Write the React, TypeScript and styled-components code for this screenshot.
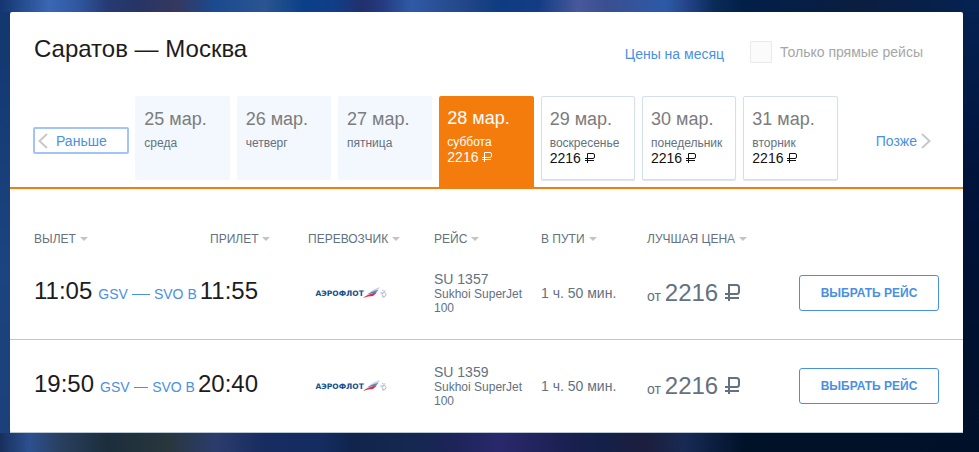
import React from "react";
import styled, { createGlobalStyle, css } from "styled-components";

const colors = {
  orange: "#f47c0c",
  link: "#4a90e2",
  text: "#1c1c1c",
  slate: "#637180",
  muted: "#7c7c7c",
  arrow: "#c4c4c4",
  line: "#b9c8d6",
};

const topGlow =
  "linear-gradient(90deg, #14356e 0, #3a68b4 5%, #2f57a0 8%, #263a72 11%, #263566 14%, #36385e 18%, #1a4a90 22%, #2a5590 27%, #0a4088 31%, #103e88 34%, #22306c 37%, #243a80 39%, #2f5aa6 42%, #24488a 47%, #0e3c80 51%, #143c84 55%, #47599a 59%, #3a4f90 62%, #2c5aa8 68%, #24468a 70%, #0a2a58 73%, #021f48 76%, #0a1e40 88%, #052252 100%)";
const bottomGlow =
  "linear-gradient(90deg, #182f5c 0, #2c5090 3%, #2a4060 6%, #1c2e3c 11%, #28363c 17%, #2c3c6c 22%, #182c60 27%, #142c60 33%, #10244c 36%, #142850 42%, #1c2458 46%, #2a286c 51%, #1a2050 58%, #14204a 61%, #1c1e3c 66%, #182a54 70%, #001228 76%, #001028 100%)";

const GlobalStyle = createGlobalStyle`
  * { box-sizing: border-box; }
  html, body, #root { min-height: 100vh; }
  body {
    margin: 0;
    font-family: "Liberation Sans", Arial, sans-serif;
    color: ${colors.text};
  }
  button { font-family: inherit; cursor: pointer; }
`;

const Page = styled.main`
  min-height: 100vh;
  padding: 12px 16px 19px 10px;
  background:
    ${topGlow} top / 100% 12px no-repeat,
    ${bottomGlow} bottom / 100% 19px no-repeat,
    linear-gradient(#12366e, #1b4480 60%, #1c3f78) left / 50% 100% no-repeat,
    linear-gradient(#052252, #00133a 40%, #001028) right / 50% 100% no-repeat;
`;

const Card = styled.section`
  background: #fff;
  border-radius: 2px;
`;

const Header = styled.header`
  display: flex;
  align-items: center;
  height: 84px;
  padding: 0 40px 4px 24px;
`;

const Title = styled.h1`
  flex: 1;
  margin: 0 0 6px;
  font-size: 24px;
  line-height: 28px;
  font-weight: 400;
`;

const MonthLink = styled.a`
  margin-right: 26px;
  padding-top: 4px;
  color: ${colors.link};
  font-size: 14px;
  line-height: 16px;
  text-decoration: none;
`;

const DirectOnly = styled.label`
  display: flex;
  align-items: center;
  gap: 8px;
  color: #a6a6a6;
  font-size: 14px;
  line-height: 16px;
`;

const CheckBox = styled.input`
  appearance: none;
  width: 22px;
  height: 22px;
  margin: 0;
  border: 1px solid #eaeaea;
  border-radius: 1px;
  background: #fbfbfb;
`;

const Week = styled.nav`
  display: grid;
  grid-template-columns: repeat(9, 1fr);
  gap: 7px;
  height: 93px;
  padding: 0 24px;
  border-bottom: 2px solid ${colors.orange};
`;

const Shift = styled.button<{ $end?: boolean; $focused?: boolean }>`
  display: flex;
  align-items: center;
  justify-content: ${(p) => (p.$end ? "flex-end" : "flex-start")};
  gap: ${(p) => (p.$end ? 4 : 8)}px;
  height: 25px;
  margin: 32px 0 0;
  padding: 0 ${(p) => (p.$end ? 8 : 4)}px;
  border: 0;
  border-radius: 1px;
  background: none;
  color: ${colors.link};
  font-size: 14px;
  line-height: 16px;
  outline: ${(p) => (p.$focused ? "2px solid #a3c3fb" : "none")};
  outline-offset: -1px;
`;

const Day = styled.button<{ $kind: "empty" | "active" | "priced" }>`
  display: flex;
  flex-direction: column;
  align-items: flex-start;
  height: 84px;
  min-width: 0;
  padding: 11px 8px 0;
  border: 1px solid #d3dfee;
  border-radius: 2px;
  background: #fff;
  color: ${colors.slate};
  white-space: nowrap;
  overflow: hidden;
  ${(p) =>
    p.$kind === "empty" &&
    css`
      border-color: #f3f8fe;
      background: #f3f8fe;
    `}
  ${(p) =>
    p.$kind === "priced" &&
    css`
      box-shadow: 0 1px 1px #dde5ee;
    `}
  ${(p) =>
    p.$kind === "active" &&
    css`
      height: 91px;
      border: 0;
      border-radius: 2px 2px 0 0;
      background: ${colors.orange};
      color: #fff;
    `}
`;

const DayDate = styled.span<{ $active: boolean }>`
  margin-bottom: 6px;
  color: ${(p) => (p.$active ? "#fff" : colors.muted)};
  font-size: 18px;
  line-height: 22px;
`;

const DayName = styled.span`
  font-size: 12px;
  line-height: 14px;
`;

const DayPrice = styled.span<{ $active: boolean }>`
  color: ${(p) => (p.$active ? "#fff" : "#111")};
  font-size: 14px;
  line-height: 16px;
`;

const Flights = styled.table`
  width: 100%;
  border-collapse: separate;
  border-spacing: 0;
  table-layout: fixed;
  color: ${colors.slate};
`;

const Col = styled.col<{ $w?: number }>`
  width: ${(p) => (p.$w ? `${p.$w}px` : "auto")};
`;

const HeadCell = styled.th<{ $first?: boolean }>`
  height: 58px;
  padding: 0 0 0 ${(p) => (p.$first ? 24 : 0)}px;
  text-align: left;
  vertical-align: bottom;
`;

const Sort = styled.button`
  display: flex;
  align-items: center;
  gap: 4px;
  margin: 0;
  padding: 0 0 1px;
  border: 0;
  background: none;
  color: ${colors.slate};
  font-size: 12px;
  line-height: 14px;
  white-space: nowrap;
`;

const Cell = styled.td`
  height: 93px;
  padding: 0;
  border-bottom: 1px solid ${colors.line};
  vertical-align: middle;
  font-size: 14px;
  line-height: 16px;
`;

const RouteCell = styled(Cell)`
  padding: 0 50px 4px 24px;
`;

const Route = styled.div`
  display: flex;
  align-items: baseline;
`;

const Time = styled.time`
  color: ${colors.text};
  font-size: 24px;
  line-height: 28px;
`;

const Airports = styled.a`
  display: flex;
  flex: 1;
  align-items: center;
  gap: 4px;
  margin: 0 3px 0 6px;
  color: ${colors.link};
  text-decoration: none;
  white-space: nowrap;
`;

const Dash = styled.span`
  flex: 1;
  height: 1px;
  background: ${colors.link};
`;

const LogoCell = styled(Cell)`
  padding-left: 7px;
`;

const Plane = styled.div`
  font-size: 12px;
  line-height: 14px;
`;

const Price = styled.span`
  font-size: 24px;
  line-height: 28px;
`;

const Choose = styled.button`
  width: 140px;
  height: 36px;
  padding: 0;
  border: 1px solid ${colors.link};
  border-radius: 3px;
  background: #fff;
  color: ${colors.link};
  font-size: 12px;
  font-weight: 700;
`;

const Chevron = ({ right }: { right?: boolean }) => (
  <svg width="10" height="16" viewBox="0 0 10 16" fill="none" stroke="#c8c8c8" strokeWidth="2" aria-hidden="true">
    <path d={right ? "M1 1l7.5 7L1 15" : "M9 1L1.5 8 9 15"} />
  </svg>
);

const SortArrow = () => (
  <svg width="8" height="4" viewBox="0 0 8 4" aria-hidden="true">
    <path d="M0 0h8L4 4z" fill={colors.arrow} />
  </svg>
);

const RubleSmall = () => (
  <svg width="10" height="10" viewBox="0 0 10 10" fill="none" stroke="currentColor" role="img" aria-label="₽">
    <path d="M2.5 10V.5H8Q9.500 .5 9.500 2V4Q9.500 5.500 8 5.500H0M0 7.500h9" />
  </svg>
);

const RubleLarge = () => (
  <svg width="16" height="17" viewBox="0 0 16 17" fill="none" stroke="currentColor" strokeWidth="2" role="img" aria-label="₽">
    <path d="M4 17V1h7.500Q14 1 14 3.500V7.500Q14 10 11.500 10H0M0 14h14" />
  </svg>
);

const AeroflotLogo = () => (
  <svg width="74" height="14" viewBox="0 0 148 28" role="img" aria-label="Аэрофлот" display="block">
    <text x="1" y="20" fontFamily="DejaVu Sans, sans-serif" fontSize="15" fontWeight="700" fill="#12508f">
      АЭРОФЛОТ
    </text>
    <path d="M108 14Q116 6 130 2L125 10Q114 11 108 14z" fill="#c9d4e4" />
    <path d="M104 17Q112 10 127 8L121 14Q112 14 104 17z" fill="#5b86c2" />
    <path d="M96 24Q106 15 124 13L116 20Q106 20 96 24z" fill="#d6304a" />
    <path
      d="M134 8q2 3 7 2M130 14h7M138 13q4 0 4 4t-4 4-4-4 4-4M134 22h5"
      stroke="#b4bccd"
      strokeWidth="2"
      fill="none"
    />
  </svg>
);

type DayInfo = { date: string; name: string; price?: string; active?: boolean };

const days: DayInfo[] = [
  { date: "25 мар.", name: "среда" },
  { date: "26 мар.", name: "четверг" },
  { date: "27 мар.", name: "пятница" },
  { date: "28 мар.", name: "суббота", price: "2216", active: true },
  { date: "29 мар.", name: "воскресенье", price: "2216" },
  { date: "30 мар.", name: "понедельник", price: "2216" },
  { date: "31 мар.", name: "вторник", price: "2216" },
];

const headings = ["ВЫЛЕТ", "ПРИЛЕТ", "ПЕРЕВОЗЧИК", "РЕЙС", "В ПУТИ", "ЛУЧШАЯ ЦЕНА"];
const widths = [200, 98, 126, 107, 106, 152];

const flights = [
  { from: "11:05", to: "11:55", number: "SU 1357", price: "2216" },
  { from: "19:50", to: "20:40", number: "SU 1359", price: "2216" },
];

export default function App() {
  return (
    <>
      <GlobalStyle />
      <Page>
        <Card>
          <Header>
            <Title>Саратов — Москва</Title>
            <MonthLink href="#month">Цены на месяц</MonthLink>
            <DirectOnly>
              <CheckBox type="checkbox" disabled />
              Только прямые рейсы
            </DirectOnly>
          </Header>
          <Week aria-label="Даты">
            <Shift type="button" $focused>
              <Chevron />
              Раньше
            </Shift>
            {days.map((d) => (
              <Day
                key={d.date}
                type="button"
                aria-pressed={!!d.active}
                $kind={d.active ? "active" : d.price ? "priced" : "empty"}
              >
                <DayDate $active={!!d.active}>{d.date}</DayDate>
                <DayName>{d.name}</DayName>
                {d.price && (
                  <DayPrice $active={!!d.active}>
                    {d.price} <RubleSmall />
                  </DayPrice>
                )}
              </Day>
            ))}
            <Shift type="button" $end>
              Позже
              <Chevron right />
            </Shift>
          </Week>
          <Flights>
            <colgroup>
              {widths.map((w, i) => (
                <Col key={i} $w={w} />
              ))}
              <Col />
            </colgroup>
            <thead>
              <tr>
                {headings.map((h, i) => (
                  <HeadCell key={h} scope="col" $first={i === 0}>
                    <Sort type="button">
                      {h}
                      <SortArrow />
                    </Sort>
                  </HeadCell>
                ))}
                <HeadCell as="td" />
              </tr>
            </thead>
            <tbody>
              {flights.map((f) => (
                <tr key={f.number}>
                  <RouteCell colSpan={2}>
                    <Route>
                      <Time>{f.from}</Time>
                      <Airports href="#route">
                        <span>GSV</span>
                        <Dash />
                        <span>SVO B</span>
                      </Airports>
                      <Time>{f.to}</Time>
                    </Route>
                  </RouteCell>
                  <LogoCell>
                    <AeroflotLogo />
                  </LogoCell>
                  <Cell>
                    {f.number}
                    <Plane>
                      Sukhoi SuperJet
                      <br />
                      100
                    </Plane>
                  </Cell>
                  <Cell>1 ч. 50 мин.</Cell>
                  <Cell>
                    от{" "}
                    <Price>
                      {f.price} <RubleLarge />
                    </Price>
                  </Cell>
                  <Cell>
                    <Choose type="button">ВЫБРАТЬ РЕЙС</Choose>
                  </Cell>
                </tr>
              ))}
            </tbody>
          </Flights>
        </Card>
      </Page>
    </>
  );
}
